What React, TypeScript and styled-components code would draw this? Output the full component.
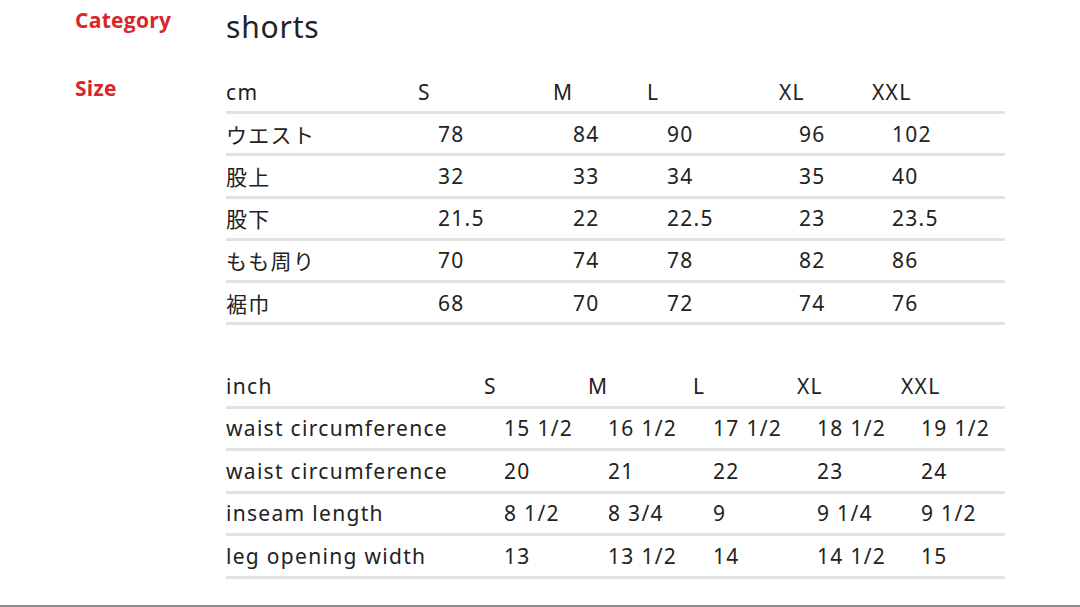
import styled, { createGlobalStyle } from 'styled-components';

const GlobalStyle = createGlobalStyle`
  html, body {
    margin: 0;
    padding: 0;
    background: #fff;
  }
  body {
    font-family: "Noto Sans", "Noto Sans CJK JP", sans-serif;
    color: #222;
  }
`;

// Layout
const Page = styled.main`
  box-sizing: border-box;
  height: 607px;
  padding: 0 0 0 75px;
  border-bottom: 2px solid #8c8c8c;
  overflow: hidden;
`;

const Section = styled.section<{ $top: number }>`
  display: grid;
  grid-template-columns: 151px 779px;
  align-items: start;
  padding-top: ${(p) => p.$top}px;
`;

const Label = styled.div<{ $lineHeight: number }>`
  font-family: "Open Sans", "Noto Sans", sans-serif;
  font-weight: 700;
  font-size: 21px;
  line-height: ${(p) => p.$lineHeight}px;
  color: #d8262c;
  letter-spacing: 0.3px;
`;

const Category = styled.div`
  font-size: 30px;
  line-height: 54px;
  letter-spacing: 0.8px;
  color: #222;
`;

const Tables = styled.div`
  display: flex;
  flex-direction: column;
  gap: 41px;
`;

const Table = styled.div``;

const Row = styled.div<{ $cols: string; $height: number }>`
  display: grid;
  grid-template-columns: ${(p) => p.$cols};
  height: ${(p) => p.$height}px;
  align-items: center;
  border-bottom: 3px solid #e1e1e1;
  font-size: 21px;
  letter-spacing: 1.3px;
  color: #222;
`;

const Cell = styled.div<{ $data?: boolean }>`
  white-space: nowrap;
  padding-left: ${(p) => (p.$data ? 20 : 0)}px;
`;

const sizes = ['S', 'M', 'L', 'XL', 'XXL'];

const cmRows: [string, string[]][] = [
  ['ウエスト', ['78', '84', '90', '96', '102']],
  ['股上', ['32', '33', '34', '35', '40']],
  ['股下', ['21.5', '22', '22.5', '23', '23.5']],
  ['もも周り', ['70', '74', '78', '82', '86']],
  ['裾巾', ['68', '70', '72', '74', '76']],
];

const inchRows: [string, string[]][] = [
  ['waist circumference', ['15 1/2', '16 1/2', '17 1/2', '18 1/2', '19 1/2']],
  ['waist circumference', ['20', '21', '22', '23', '24']],
  ['inseam length', ['8 1/2', '8 3/4', '9', '9 1/4', '9 1/2']],
  ['leg opening width', ['13', '13 1/2', '14', '14 1/2', '15']],
];

function SizeTable({
  unit,
  rows,
  cols,
  height,
}: {
  unit: string;
  rows: [string, string[]][];
  cols: string;
  height: number;
}) {
  return (
    <Table>
      <Row $cols={cols} $height={height}>
        <Cell>{unit}</Cell>
        {sizes.map((s) => (
          <Cell key={s}>{s}</Cell>
        ))}
      </Row>
      {rows.map(([name, values], i) => (
        <Row key={i} $cols={cols} $height={height}>
          <Cell>{name}</Cell>
          {values.map((v, j) => (
            <Cell key={j} $data>
              {v}
            </Cell>
          ))}
        </Row>
      ))}
    </Table>
  );
}

export default function App() {
  return (
    <>
      <GlobalStyle />
      <Page>
        <Section $top={0}>
          <Label $lineHeight={40}>Category</Label>
          <Category>shorts</Category>
        </Section>
        <Section $top={18}>
          <Label $lineHeight={32}>Size</Label>
          <Tables>
            <SizeTable
              unit="cm"
              rows={cmRows}
              cols="192px 135px 94px 132px 93px 1fr"
              height={39.2}
            />
            <SizeTable
              unit="inch"
              rows={inchRows}
              cols="258px 104px 105px 104px 104px 1fr"
              height={39.5}
            />
          </Tables>
        </Section>
      </Page>
    </>
  );
}
